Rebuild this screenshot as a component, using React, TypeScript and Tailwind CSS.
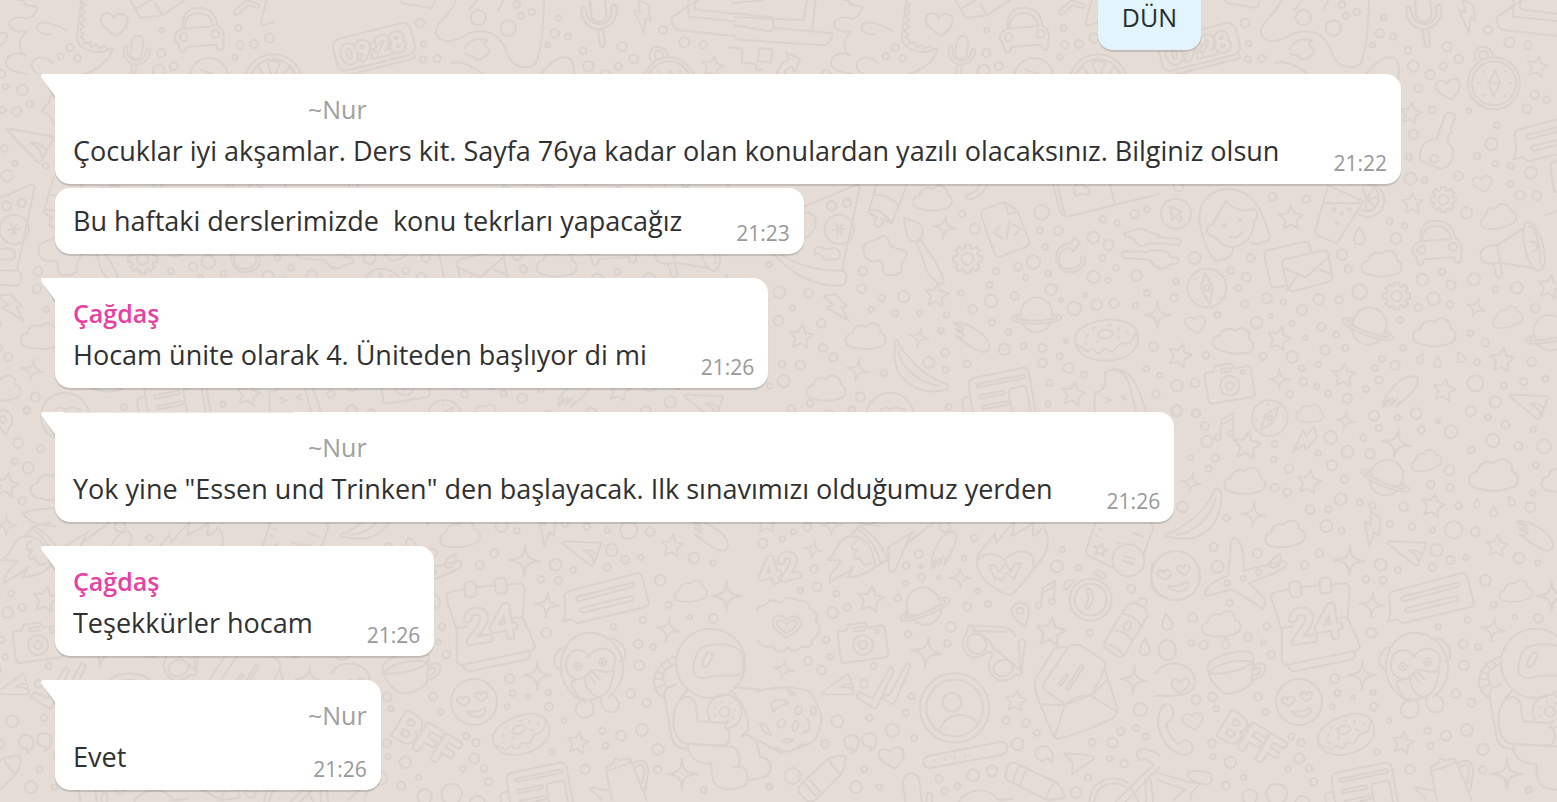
import { clsx } from "clsx";

type Message = {
  sender?: string;
  nickname?: string;
  text: string;
  time: string;
  edged?: boolean;
};

const messages: Message[] = [
  {
    nickname: "~Nur",
    text: "Çocuklar iyi akşamlar. Ders kit. Sayfa 76ya kadar olan konulardan yazılı olacaksınız. Bilginiz olsun",
    time: "21:22",
  },
  { text: "Bu haftaki derslerimizde  konu tekrları yapacağız", time: "21:23" },
  { sender: "Çağdaş", text: "Hocam ünite olarak 4. Üniteden başlıyor di mi", time: "21:26" },
  {
    nickname: "~Nur",
    text: 'Yok yine "Essen und Trinken" den başlayacak. Ilk sınavımızı olduğumuz yerden',
    time: "21:26",
    edged: true,
  },
  { sender: "Çağdaş", text: "Teşekkürler hocam", time: "21:26" },
  { nickname: "~Nur", text: "Evet", time: "21:26" },
];

/* ---------- Wallpaper ---------- */

const BG = "#e5dcd6";
const LINE = "#dbd2cc";

// Gear outline with eight rounded teeth
const gearPath = (() => {
  const pts: string[] = [];
  for (let i = 0; i < 8; i++) {
    const a = (i * Math.PI) / 4;
    [
      [-0.28, 31],
      [-0.2, 41],
      [0.2, 41],
      [0.28, 31],
    ].forEach(([d, r]) => pts.push(`${(Math.cos(a + d) * r).toFixed(1)} ${(Math.sin(a + d) * r).toFixed(1)}`));
  }
  return `M${pts.join("L")}Z`;
})();

// Hollow lettering: a thick dark stroke with a thinner light one on top
function Lettering({ x, y, size, turn, children }: { x: number; y: number; size: number; turn: number; children: string }) {
  const common = {
    textAnchor: "middle" as const,
    dominantBaseline: "central" as const,
    fontSize: size,
    fontFamily: "Lato",
  };
  return (
    <g transform={`translate(${x} ${y}) rotate(${turn})`}>
      <text {...common} fill={LINE} strokeWidth="17">
        {children}
      </text>
      <text {...common} fill={BG} stroke={BG} strokeWidth="5">
        {children}
      </text>
    </g>
  );
}

const shapes = {
  star: <path d="M0-38L11-14L37-11L18 7L22 33L0 21L-22 33L-18 7L-37-11L-11-14Z" />,
  sparkle: <path d="M0-42C2-10 10-4 42 0C10 4 2 10 0 42C-2 10-10 4-42 0C-10-4-2-10 0-42Z" />,
  cloud: <path d="M-40 36C-68 32-68-2-42-6C-36-28-16-36 0-26C18-48 48-34 46-8C70 2 64 32 40 36C14 44-14 44-40 36Z" />,
  heart: <path d="M4 34C-26 12-42-2-38-18C-32-38-8-34-2-18C8-36 34-32 38-14C40 2 30 14 4 34Z" />,
  drop: <path d="M0-24C8-8 16 2 15 11C11 25-11 25-15 11C-16 2-8-8 0-24Z" />,
  bolt: <path d="M-38-36L-2-42L34-4L16-2L38 38L-28-2L-8-8Z" />,
  gear: (
    <>
      <path d={gearPath} />
      <circle r="16" />
    </>
  ),
  planet: (
    <>
      <circle r="50" />
      <ellipse cy="4" rx="80" ry="19" />
      <ellipse cy="3" rx="66" ry="9" />
      <path d="M-47 5A50 50 0 1 1 47 5C28 15-28 15-47 5Z" />
    </>
  ),
  camera: (
    <>
      <path d="M-60-42H-42L-34-58H14L22-42H60Q70-42 70-32V42Q70 52 60 52H-60Q-70 52-70 42V-32Q-70-42-60-42Z" />
      <circle cy="7" r="29" />
      <circle cy="7" r="12" />
      <circle cx="46" cy="-28" r="6" />
      <rect x="-20" y="-46" width="32" height="11" rx="5" />
    </>
  ),
  donut: (
    <>
      <path d="M-94-6C-96-44-40-62 10-60C70-58 98-30 94 2C90 44 50 64 0 62C-56 60-94 34-94-6Z" />
      <path d="M-94-6C-90 20-72 10-68 24C-62 38-50 16-42 24C-34 40-24 44-14 28C-4 18 4 40 18 34C30 26 38 8 52 14C70 22 80 2 90-14" />
      <ellipse cx="-2" cy="-18" rx="22" ry="13" />
      <path d="M-60-14l6-8M-40-36l8-6M-32 4l8-4M8-44l8 2M40-34l-4 8M34-6l8 6M62-18l4 6M-64 2l2 6" />
    </>
  ),
  smiley: (
    <>
      <circle r="69" />
      <path d="M-30 12C-46 4-56-4-50-12C-44-18-36-14-34-8C-32-18-18-20-14-10C-10-2-20 4-30 12Z" />
      <path d="M24-2C8-12 0-18 6-26C12-32 18-28 22-22C24-32 38-32 40-24C42-14 32-8 24-2Z" />
      <path d="M-22 28C-2 32 18 28 32 16C40 30 28 46 8 44C-6 44-16 40-22 28Z" />
    </>
  ),
  banana: (
    <path d="M-82-70C-74-76-68-70-70-58C-46-26 2 44 80 66C94 74 84 86 70 88C0 104-92 60-82-44ZM-72-38C-60 20-6 62 58 74" />
  ),
  feather: (
    <path d="M-54-42C-30-46-6-34 20-16C50 6 58 30 48 42C34 56 0 34-34 8M-54-42L-28-30M-54-42C-60-38-36-28-26-20M-46-22C-52-18-30-10-22-4M-48-4C-50 2-34 6-30 10M-46-22L-28-14M-48-4L-30 4" />
  ),
  car: (
    <>
      <path d="M-48-4C-50-46-36-66 0-66C34-66 52-46 56-14C74-4 80 10 74 32V52C72 62 58 62 54 54V44L-36 50L-40 62C-46 72-58 66-58 54L-62 40C-76 30-76 6-48-4Z" />
      <path d="M-42-4C-42-38-28-50 0-50C28-50 40-34 44-12Z" />
      <circle cx="-45" cy="22" r="12" />
      <circle cx="50" cy="12" r="12" />
    </>
  ),
  compass: (
    <>
      <circle r="58" />
      <path d="M-6-46L18 0L8 48L-18 2Z" />
      <circle r="8" />
      <path d="M-36-28l2 2M28-36l2 2M-28 34l2 2M36 28l2 2" />
    </>
  ),
  paper: (
    <>
      <path d="M-72 140L-100-34Q-102-54-84-58L58-88Q76-92 80-74L118 140" />
      <path d="M-96 0C-118-2-122 8-118 24L-106 100" />
      <path d="M-74-40L66-68Q74-60 66-58L-72-30Q-80-36-74-40ZM-68-6L4-20Q12-14 6-10L-64 4Q-72-2-68-6ZM-60 26L14 12Q22 18 16 22L-54 36Q-64 30-60 26Z" />
      <path d="M28-26L62-34Q72-36 74-26L86 44L40 54Q32 54 30 44L20-10Q18-24 28-26Z" />
    </>
  ),
  plane: <path d="M-56-24L50-20Q60-20 56-12L36 42Q32 52 22 46L-56-16Q-62-22-56-24ZM36 42C34 22 22 10 4 4C14-2 34 6 42 14" />,
  note: (
    <>
      <path d="M-16 34V-18L18-44L22 20M-16-2L18-28" />
      <circle cx="-22" cy="34" r="9" />
      <circle cx="16" cy="20" r="9" />
    </>
  ),
  speech: (
    <>
      <path d="M-110-22L92-76Q106-80 110-66L130 10Q132 20 122 24L-84 74L-100 62L-128 68C-120 52-118 40-120 28L-124-6Q-122-18-110-22Z" />
      <path d="M-84-6L80-48Q92-44 84-36L-80 8Q-92 4-84-6ZM-72 28L78-8Q90-4 80 6L-68 42Q-82 38-72 28Z" />
    </>
  ),
  mic: (
    <>
      <rect x="-20" y="-52" width="38" height="78" rx="19" />
      <path d="M-44-8C-46 20-30 44 0 44C28 42 46 20 44-8C40-16 30-14 32-4C30 20 20 32 0 32C-20 30-32 16-32-6C-32-16-42-16-44-8ZM-8 44L-6 86Q4 94 6 84V44" />
    </>
  ),
};

type Item = [kind: keyof typeof shapes, x: number, y: number, scale?: number, turn?: number];
type Dot = [x: number, y: number, r: number];

type Patch = {
  x: number;
  y: number;
  items: Item[];
  dots: Dot[];
  art?: React.ReactNode;
};

// The wallpaper is drawn at three times its size, in patches
const patches: Patch[] = [
  {
    x: 735,
    y: 0,
    items: [
      ["heart", 613, 73, 1.05],
      ["mic", 680, 154, 0.9, 8],
      ["car", 866, 90],
    ],
    dots: [
      [755, 90, 7], [985, 84, 9], [990, 135, 11], [1032, 132, 12], [1078, 114, 14], [975, 171, 8],
      [480, 143, 11], [452, 169, 9], [503, 175, 10], [754, 159, 12], [791, 199, 12], [746, 212, 18],
    ],
    art: (
      <>
        <path d="M0 40L112 52L116 84L280 98Q294 98 292 104C286 126 276 140 258 136L0 118M0 76L104 94Q114 92 118 82" />
        <path d="M0 52L206 60L216 0M232 92L242 0M-10 10L90 0" />
        <rect x="70" y="146" width="40" height="40" rx="3" transform="rotate(5 90 166)" />
        <path d="M-20 142L22 146L20 188M24 188L64 192L62 208L80 210" />
        <path d="M124 222C138 190 150 178 164 178L152 158L196 176L180 216L168 200C156 206 150 212 148 222" />
        <path d="M310-10C322 4 332 0 342 0C338 22 372 14 382 22C378 44 366 54 348 56C326 48 296 56 298 74C300 92 328 96 348 96C322 120 328 140 334 158L344 166C322 152 286 164 288 190C290 210 320 218 352 222" />
        <path d="M472 92C440 76 400 60 384 72C372 90 392 106 422 102M428 188C408 170 374 166 366 190C362 206 372 216 384 222" />
        <path d="M514 0L500 110C502 150 560 170 608 144C602 180 560 214 516 224" />
        <path d="M514 4l12 10l-12 12l12 10l-14 12l12 10l-14 12l12 10l-14 12l12 10l-10 10l14 6l-2 14l18-6l4 16l16-8l6 12l16-8l10 8" />
        <path d="M660 0L692 54L756 46L830-4M678 26L726-2M736 12L756 46" />
        <path d="M972 34L1010 0L1048 14Q1050 28 1036 22L1012 16L984 44Q970 46 972 34ZM1070 0L1052 68Q1058 80 1068 74L1090 66" />
        <circle cx="897" cy="232" r="58" />
        <path d="M872 210L912 222" />
        <circle cx="1090" cy="250" r="87" />
        <circle cx="1090" cy="250" r="72" />
        <path d="M1090 238L1072 190Q1092 174 1110 190ZM1070 240L1044 200Q1032 206 1024 222M1108 240L1138 200Q1152 212 1156 226" />
      </>
    ),
  },
  {
    x: 1040,
    y: 0,
    items: [
      ["mic", 1152, 34, 1.2, -6],
      ["bolt", 1278, 48, 0.95, 35],
      ["star", 1492, 200, 0.85, 12],
      ["heart", 1226, 268, 0.95, -12],
      ["star", 1112, 340, 0.85, 8],
      ["speech", 1548, 410],
      ["heart", 1328, 552, 0.75, -12],
    ],
    dots: [
      [790, 53, 23], [880, 84, 23], [906, 14, 10], [918, 47, 9], [950, 36, 10], [1031, 54, 8], [1020, 100, 13],
      [1059, 110, 9], [998, 135, 7], [1104, 152, 10], [1120, 199, 16], [1170, 224, 14], [1221, 140, 14],
      [1210, 199, 11], [1256, 177, 13], [1344, 90, 12], [1408, 127, 15], [1464, 135, 11], [615, 69, 13],
      [626, 131, 8], [624, 178, 9], [666, 176, 11], [1135, 265, 12], [1176, 330, 11], [1120, 403, 14],
      [1286, 332, 7], [1370, 376, 9], [1354, 432, 18], [1311, 468, 10], [1366, 491, 8], [1412, 498, 9],
      [1473, 518, 18], [1107, 471, 9], [1112, 536, 18], [1154, 541, 9], [1256, 528, 14], [1410, 552, 9],
      [1484, 284, 12], [1520, 299, 10], [1460, 326, 13],
    ],
    art: (
      <>
        <g transform="rotate(-14 476 145)">
          <rect x="358" y="92" width="240" height="98" rx="24" />
          <path d="M364 204H586Q594 196 588 188" />
        </g>
        <Lettering x={474} y={142} size={74} turn={-14}>
          09:28
        </Lettering>
        <circle cx="1362" cy="250" r="78" />
        <circle cx="1362" cy="250" r="66" />
        <path d="M1366 210L1380 248L1360 290L1346 250ZM1346 250H1380M1313 248h8M1406 250h8M1328 212l5 5M1398 212l-5 5M1328 288l5-5M1398 290l-5-5" />
        <path d="M1306 182C1294 150 1320 136 1338 142C1358 150 1362 164 1354 172" />
        <circle cx="1331" cy="165" r="13" />
        <path d="M724-10C720 40 660 60 662 100C680 140 730 120 760 100C830 80 860 110 880 170C900 210 950 206 962 190C984 140 984 60 988-10" />
        <path d="M1448 0L1370 52Q1370 76 1386 90L1560 108M1420 0V50L1560 64M1440 0V28L1560 42" />
        <path d="M980 222C1010 180 1040 164 1066 176C1082 200 1078 220 1070 250" />
        <path d="M750 148C756 120 796 110 816 124C800 130 812 140 824 150C822 166 800 180 782 178C776 162 762 166 752 162M706 190C730 178 780 200 802 222" />
        <path d="M550-6L562 10L650 24L664-4M764 30L790-6M850 30L868-6" />
        <path d="M1216 344C1222 334 1242 336 1246 352L1232 386L1236 398L1226 402L1224 430C1240 440 1244 456 1236 480C1226 506 1208 508 1190 502L1152 488C1134 480 1138 456 1150 434C1160 420 1178 418 1190 418Z" />
        <circle cx="1183" cy="477" r="12" />
        <path d="M1560 480L1540 486Q1530 490 1532 502L1542 574L1560 578" />
      </>
    ),
  },
  {
    x: 760,
    y: 180,
    items: [
      ["cloud", 518, 52, 0.95],
      ["sparkle", 553, 142, 0.85, 8],
      ["gear", 623, 237, 1.08],
      ["star", 530, 345, 0.95, 8],
      ["bolt", 228, 384, 1],
      ["star", 124, 470, 0.95, 6],
      ["cloud", 317, 466, 0.98],
      ["sparkle", 478, 472, 0.7, 12],
      ["feather", 636, 470],
      ["banana", 482, 548, 0.95],
      ["planet", 830, 410, 0.93, -1],
      ["donut", 1040, 480, 1, -5],
      ["sparkle", 292, 570, 0.8, 12],
      ["cloud", 198, 622, 0.95],
      ["paper", 726, 652],
      ["star", 940, 642, 0.95, 10],
      ["sparkle", 1192, 405, 0.95],
    ],
    dots: [
      [260, 70, 12], [215, 78, 13], [606, 102, 10], [644, 146, 15], [845, 97, 22], [839, 151, 9], [895, 152, 13],
      [855, 201, 9], [820, 246, 20], [774, 260, 12], [797, 293, 8], [708, 274, 9], [865, 281, 8], [688, 314, 9],
      [602, 339, 8], [638, 388, 13], [693, 363, 19], [764, 348, 12], [873, 328, 17], [903, 359, 6], [974, 345, 6],
      [943, 386, 20], [1010, 374, 16], [1062, 370, 14], [1126, 377, 8], [1161, 339, 9], [1000, 172, 17],
      [1046, 195, 15], [1027, 233, 9], [1068, 263, 9], [1000, 291, 18], [1044, 301, 8], [1130, 286, 16],
      [1029, 118, 10], [1071, 129, 8], [1124, 102, 13], [1161, 88, 9], [309, 274, 13], [305, 326, 13],
      [365, 354, 10], [431, 350, 17], [333, 388, 8], [405, 400, 10], [479, 399, 8], [559, 405, 8], [543, 452, 9],
      [58, 337, 18], [146, 340, 13], [97, 385, 8], [56, 422, 15], [184, 430, 13], [189, 503, 12], [220, 532, 12],
      [66, 553, 10], [121, 555, 14], [71, 603, 18], [26, 254, 8], [371, 579, 10], [301, 651, 14], [506, 548, 16],
      [555, 518, 12], [557, 569, 9], [622, 552, 11], [733, 508, 17], [790, 499, 9], [746, 455, 9], [696, 428, 9],
      [847, 504, 12], [899, 529, 9], [847, 549, 13], [926, 564, 15], [973, 584, 9], [917, 482, 6], [868, 609, 9],
      [864, 673, 8], [566, 681, 9], [150, 670, 10], [94, 686, 11], [1181, 500, 13], [1159, 566, 8], [1188, 642, 11],
      [275, 688, 10], [29, 618, 8],
    ],
    art: (
      <>
        <path d="M-10 140L290 14Q300 14 298 26L246 270C266 280 262 310 244 318C160 318 90 280 40 220M60 222C110 256 180 274 246 272M298 26L264 190" />
        <circle cx="238" cy="148" r="44" />
        <path d="M218 150L256 146M228 132L244 164M246 132L230 164M130 98C176 92 182 146 136 174" />
        <path d="M164 206C180 190 190 212 206 206C226 200 244 212 238 232C232 246 216 232 204 240C180 240 196 218 164 222Z" />
        <path d="M356-10L326 96Q336 108 350 112C340 130 342 144 358 140C376 130 368 124 364 116L396 130L446 0M344 44C370 44 396 54 414 74M334 90C356 84 378 104 396 130" />
        <path d="M310 214C308 180 336 188 360 172C378 158 386 176 388 192C400 214 440 200 440 222C432 240 420 252 426 274C416 286 392 288 378 284C358 270 380 250 356 240C336 250 314 240 310 214Z" />
        <path d="M432 114C460 124 490 124 488 158C488 172 478 186 462 184C436 182 438 150 432 114ZM468 186L482 180C496 200 502 214 510 220C526 244 544 270 552 304C546 316 536 312 532 308C508 290 494 266 490 238Z" />
        <path d="M676 86L734 66L774 94L808 186Q808 196 800 200L722 230Q708 232 704 222L664 108Q664 90 676 86ZM734 66L744 102L774 94M720 138L702 158L728 176M740 178L748 124M758 132L780 146L764 166" />
        <path d="M874-6L900 92Q908 110 924 110L1066 74L1200 42M888-6L914 104M1046-6L1064 72M942 20L958 6L974 20L990 28L982 46L966 40L946 48Z" />
        <path d="M616 46C640 40 660 30 662-6L684-4C684 36 644 60 624 58Z" />
        <path d="M944 172L960 188L940 214L930 204C890 206 886 256 918 268C956 268 970 248 962 232Q970 224 976 236C976 270 940 282 912 274C876 250 880 196 932 188Z" />
        <path d="M1092 160C1096 154 1120 156 1126 150C1146 136 1160 160 1200 166M1092 160Q1096 172 1120 174C1132 200 1150 204 1164 190L1200 192M1088 214Q1080 226 1094 234L1170 240Q1180 262 1200 262M1088 214L1164 216Q1180 206 1200 212" />
        <circle cx="390" cy="710" r="72" />
        <path d="M362 690Q374 676 390 688Q410 676 436 690" />
        <path d="M1010 720C1000 690 1004 670 1004 636C1034 640 1040 600 1034 576C1070 560 1096 572 1110 620L1134 720M1060 568C1110 566 1130 600 1162 710M1036 654L1054 660L1040 668M1098 644L1084 652L1100 660" />
      </>
    ),
  },
  {
    x: 1157,
    y: 180,
    items: [
      ["star", 402, 114, 0.95],
      ["star", 766, 70, 0.85],
      ["gear", 859, 59, 0.95],
      ["cloud", 1022, 108, 0.88, -12],
      ["car", 838, 188],
      ["drop", 607, 168, 1.15],
      ["cloud", 674, 248, 0.98],
      ["compass", 150, 324],
      ["gear", 719, 348],
      ["planet", 634, 444, 1, 20],
      ["heart", 116, 434, 0.78, -8],
      ["cloud", 230, 478, 1, 8],
      ["cloud", 832, 454, 1.05],
      ["sparkle", 956, 383, 0.75, 20],
      ["cloud", 1050, 410, 0.75, -15],
      ["star", 366, 476, 0.95, 14],
      ["star", 68, 526, 0.95, 16],
      ["camera", 217, 610, 1, -9],
      ["sparkle", 367, 598, 0.75],
      ["star", 560, 586, 0.95, 4],
      ["drop", 790, 536, 0.7, 25],
      ["drop", 842, 546, 0.75],
      ["drop", 910, 532, 0.75, -25],
      ["star", 1036, 540, 0.98, 6],
      ["feather", 730, 634, 1, -78],
      ["star", 862, 630, 0.9, 10],
      ["planet", 1180, 464, 0.95, -12],
      ["star", 1178, 320, 0.95, 10],
      ["plane", 1116, 668],
    ],
    dots: [
      [347, 50, 12], [449, 57, 11], [64, 20, 14], [113, 234, 18], [281, 234, 12], [221, 272, 10], [268, 291, 13],
      [244, 324, 9], [263, 372, 11], [330, 355, 15], [380, 366, 8], [435, 390, 15], [485, 358, 16], [546, 360, 11],
      [405, 430, 8], [493, 441, 12], [445, 474, 7], [538, 464, 9], [504, 510, 14], [565, 503, 9], [484, 553, 8],
      [406, 531, 17], [318, 529, 11], [299, 428, 17], [340, 408, 6], [181, 405, 9], [51, 354, 11], [57, 304, 8],
      [555, 224, 16], [574, 267, 11], [608, 335, 22], [717, 175, 16], [698, 124, 9], [743, 138, 8], [929, 99, 17],
      [1060, 12, 9], [1089, 46, 14], [1139, 47, 13], [856, 275, 9], [796, 299, 18], [882, 315, 14], [830, 356, 19],
      [784, 382, 11], [879, 373, 10], [951, 298, 18], [1015, 327, 9], [1080, 323, 17], [1135, 385, 13],
      [729, 420, 9], [940, 460, 9], [985, 488, 11], [738, 503, 9], [714, 556, 14], [675, 537, 9], [654, 564, 9],
      [666, 600, 11], [627, 627, 9], [571, 655, 14], [514, 641, 9], [479, 620, 8], [439, 605, 12], [434, 565, 8],
      [398, 643, 10], [147, 526, 10], [115, 608, 13], [60, 617, 17], [60, 692, 16], [117, 700, 12], [960, 547, 9],
      [1124, 545, 13], [955, 610, 24], [1040, 617, 9], [1100, 605, 11], [1165, 597, 9], [1015, 666, 17], [8, 586, 8],
    ],
    art: (
      <>
        <circle cx="57" cy="101" r="45" />
        <path d="M40 80L74 94L64 102L76 118L68 124L56 110L46 120Z" />
        <path d="M128 130C120 60 170 20 230 28C300 40 320 110 340 172Q336 190 290 192L280 186M128 130C138 180 152 220 176 242C210 240 232 224 228 200M206 62C190 100 166 118 172 134C150 130 142 156 160 166C176 166 186 186 200 196C240 210 290 190 292 120C310 110 298 84 286 88C250 96 224 84 206 62ZM218 172C232 176 246 168 256 156" />
        <circle cx="204" cy="136" r="4" />
        <circle cx="249" cy="121" r="4" />
        <path d="M514 16L474 154Q476 164 490 170L540 190L620 64ZM500 70H616" />
        <path d="M580 14C610-10 680 10 682 60C680 104 640 120 606 104M628 14C650 14 668 34 664 60C660 90 634 98 612 90M628 56L616 20M628 56L650 24M628 56L664 52M628 56L654 82M628 56L626 94" />
        <circle cx="532" cy="88" r="4" />
        <circle cx="577" cy="88" r="4" />
        <circle cx="554" cy="100" r="4" />
        <circle cx="540" cy="130" r="4" />
        <path d="M390 318L356 322Q344 324 340 312L322 226Q320 214 334 210L440 186Q454 182 458 194L464 216" />
        <path d="M384 238L496 212Q510 210 514 222L526 292Q526 302 514 306L408 334Q396 336 392 326L376 256Q374 242 384 238ZM376 262L446 292L512 234M392 328L420 288M526 284L488 270" />
        <path d="M1020 196L1100 144M1030 248L1126 264M1020 196C990 192 970 208 970 228C972 248 990 256 1030 248M1020 196L1036 282Q1030 300 1018 288L1008 250" />
        <path d="M1104 130C1124 112 1156 160 1164 230C1166 268 1144 284 1128 262C1108 240 1090 160 1104 130ZM1116 140C1134 130 1148 190 1150 250M1122 186C1140 180 1150 210 1126 216" />
        <path d="M0 170L64 176Q78 184 68 194L0 190M0 212Q30 206 40 232L60 234Q70 240 60 250L38 254Q24 270 0 264" />
        <path d="M1166 104Q1190 100 1200 90" />
      </>
    ),
  },
  {
    x: 1157,
    y: 400,
    items: [
      ["compass", 338, 54, 0.92, 45],
      ["cloud", 458, 38, 0.68],
      ["sparkle", 565, 62, 0.7, 10],
      ["note", 208, 80, 1, 6],
      ["star", 270, 136, 1.1, 8],
      ["bolt", 440, 118, 0.95, 85],
      ["cloud", 263, 240, 1],
      ["star", 456, 246, 0.95, 10],
      ["sparkle", 718, 130, 1.05, 10],
      ["planet", 686, 238, 0.96, 22],
      ["cloud", 806, 180, 0.75, -15],
      ["cloud", 1010, 222, 1.2],
      ["cloud", 1215, 236, 1],
      ["sparkle", 102, 248, 0.75, 12],
      ["banana", 102, 340, 0.95, -84],
      ["sparkle", 289, 344, 0.85, 5],
      ["cloud", 383, 400, 0.98, -6],
      ["star", 828, 316, 0.95, 12],
      ["bolt", 640, 386, 1, 48],
      ["plane", 750, 448],
      ["sparkle", 578, 482, 1.1, 2],
      ["star", 1020, 438, 0.88, 6],
      ["feather", 1136, 406],
      ["drop", 960, 310, 0.6, 5],
      ["drop", 1010, 334, 0.7],
      ["drop", 1062, 303, 0.65, -25],
      ["speech", 820, 596],
      ["smiley", 56, 527, 1.06],
      ["cloud", 192, 670, 0.95, -4],
      ["sparkle", 645, 614, 0.9, 5],
      ["cloud", 1076, 572, 0.8, -6],
      ["sparkle", 1184, 588, 1.1],
      ["sparkle", 1008, 688, 0.88, 10],
      ["drop", 30, 666, 1.05, -10],
      ["drop", 206, 730, 0.75],
      ["sparkle", 616, 826, 1],
      ["smiley", 426, 906],
      ["donut", 568, 1004, 0.92, -20],
      ["heart", 108, 964, 0.78, -8],
      ["star", 738, 1028, 0.88, 10],
      ["paper", 624, 1176],
      ["sparkle", 1050, 1122, 1.08],
    ],
    dots: [
      [58, 33, 16], [117, 40, 12], [144, 78, 12], [150, 124, 17], [101, 173, 8], [175, 174, 11], [155, 206, 9],
      [354, 132, 9], [350, 178, 8], [396, 206, 13], [353, 263, 12], [391, 277, 12], [483, 159, 8], [521, 112, 19],
      [525, 196, 15], [562, 238, 11], [572, 155, 18], [639, 161, 14], [619, 113, 9], [651, 47, 15], [665, 84, 9],
      [722, 53, 8], [778, 40, 16], [793, 90, 11], [843, 64, 6], [882, 95, 19], [941, 34, 15], [993, 52, 9],
      [1045, 74, 12], [1129, 88, 8], [1008, 121, 20], [1084, 137, 12], [1161, 139, 21], [943, 150, 10],
      [877, 211, 15], [879, 263, 11], [821, 254, 11], [1136, 195, 9], [1127, 279, 8], [1120, 322, 15],
      [551, 298, 18], [608, 308, 9], [646, 317, 10], [740, 320, 13], [699, 372, 9], [765, 380, 10], [826, 391, 8],
      [905, 317, 10], [890, 390, 26], [955, 395, 13], [839, 450, 18], [880, 480, 12], [927, 472, 8], [826, 502, 11],
      [723, 510, 9], [671, 494, 18], [627, 538, 10], [679, 541, 11], [459, 329, 13], [514, 328, 9], [508, 378, 18],
      [554, 392, 9], [487, 460, 12], [443, 496, 12], [209, 354, 10], [76, 321, 16], [170, 441, 12], [301, 460, 14],
      [182, 500, 18], [218, 609, 9], [107, 653, 13], [330, 680, 10], [273, 712, 12], [320, 727, 7], [343, 764, 11],
      [140, 735, 13], [104, 729, 9], [533, 836, 14], [542, 879, 9], [588, 892, 6], [649, 877, 8], [651, 920, 12],
      [526, 920, 7], [643, 698, 15], [985, 541, 16], [1086, 474, 16], [1143, 489, 8], [1010, 614, 9], [1074, 651, 7],
      [1144, 655, 13], [932, 660, 9], [844, 680, 8], [919, 732, 13], [963, 741, 9], [921, 796, 15], [896, 881, 13],
      [944, 908, 12], [695, 962, 7], [812, 993, 10], [867, 1007, 15], [820, 1037, 9], [930, 990, 18],
      [978, 1048, 17], [977, 1109, 11], [759, 1108, 14], [660, 1056, 8], [403, 1009, 9], [432, 1028, 11],
      [427, 1075, 15], [393, 1107, 8], [456, 1105, 10], [470, 1145, 11], [326, 936, 8], [303, 890, 12],
      [166, 891, 13], [177, 926, 8], [117, 899, 13], [165, 1030, 12], [168, 1070, 8], [220, 1087, 17],
      [260, 1132, 8], [207, 1157, 12], [278, 1190, 22], [359, 1182, 31], [1115, 1169, 9], [436, 1210, 22],
    ],
    art: (
      <>
        <path d="M228 414C250 418 262 440 260 512L376 484Q390 482 388 494C384 512 320 530 276 550L322 596Q328 610 316 626C290 610 250 580 222 568L160 586Q140 590 144 576C156 550 180 540 214 526L222 424ZM338 500C336 480 352 470 370 462C374 480 370 496 352 504Z" />
        <circle cx="211" cy="549" r="8" />
        <circle cx="259" cy="535" r="8" />
        <circle cx="305" cy="517" r="8" />
        <path d="M396 568L356 576Q338 580 344 598L374 690V780Q376 796 392 794L596 752Q612 748 608 734L572 654L578 568Q578 552 564 550L526 554M434 562L488 556M374 684L408 680M536 654L572 652M390 796L402 810Q408 818 420 812L588 778Q598 772 590 752" />
        <rect x="398" y="545" width="34" height="46" rx="10" transform="rotate(-6 415 568)" />
        <rect x="489" y="534" width="34" height="46" rx="10" transform="rotate(-6 506 557)" />
        <Lettering x={474} y={668} size={134} turn={-9}>
          24
        </Lettering>
        <Lettering x={284} y={1014} size={112} turn={31}>
          BFF
        </Lettering>
        <path d="M152 806C146 780 220 748 276 756C290 758 294 770 288 790L284 850C250 880 220 882 202 880C176 860 156 840 152 806ZM158 822C160 800 220 776 284 784C278 806 220 820 158 822ZM290 800C310 780 330 792 324 812C318 832 300 836 288 840M294 808C306 796 314 806 308 816C302 826 296 826 292 826" />
        <ellipse cx="31" cy="750" rx="26" ry="30" />
        <path d="M-6 888C20 886 60 892 90 880C130 860 120 800 56 790C30 790 10 800-4 820M66 880C44 862 38 852 48 842C60 836 68 842 70 848C76 830 98 834 98 848C96 864 80 872 66 880Z" />
        <path d="M20 916C40 904 50 920 48 950C44 966 28 962 28 976C34 1000 46 1020 62 1032C76 1030 80 1016 88 1020C104 1026 112 1040 106 1050C92 1070 68 1066 52 1054C12 1030-16 960 20 916Z" />
        <path d="M0 1118L96 1146L130 1150M92 1128C86 1112 110 1110 150 1116C172 1124 168 1150 150 1154C120 1150 100 1140 92 1128ZM0 1140L84 1168L50 1200M130 1150L100 1184V1200" />
        <path d="M760 906C720 890 684 850 686 800C690 730 730 698 776 698C840 700 876 760 874 810C870 850 850 874 830 890M706 740C670 740 650 790 684 810M822 716C860 710 886 740 878 776L862 784M770 770C756 740 700 740 702 800C704 830 730 842 748 836C766 830 770 822 780 810C800 804 820 826 840 812C860 780 846 752 820 746C796 744 780 756 770 770ZM740 836C716 850 716 838 720 858L740 894C790 910 830 884 838 850L846 814M760 826C756 860 770 880 800 894M766 820L790 850M778 812L802 838" />
        <circle cx="738" cy="800" r="11" />
        <circle cx="812" cy="786" r="11" />
        <circle cx="738" cy="801" r="3" />
        <circle cx="812" cy="787" r="3" />
        <path d="M746 904C722 924 728 952 758 954C790 952 790 920 776 904M810 890C800 920 820 940 846 936C872 920 860 896 836 882" />
        <path d="M840 1200L822 1110Q820 1100 834 1096L846 1084L850 1074L862 1080L890 1076Q898 1078 898 1086L944 1200M822 1112C850 1106 880 1096 896 1086M900 1094C930 1070 950 1084 948 1120L940 1170M908 1104C924 1086 938 1094 936 1120L930 1150M832 1170C810 1174 790 1160 776 1164C774 1176 800 1180 806 1200" />
      </>
    ),
  },
  {
    // Astronaut, split over the edge of the tile
    x: 1205,
    y: 510,
    items: [],
    dots: [[970, 840, 8], [1168, 831, 7]],
    art: (
      <>
        <path d="M886 440C850 450 820 480 822 520C826 544 838 556 852 562M888 462C860 470 846 490 850 508L858 530M862 448l10 18M842 462l14 18M828 482l18 10M822 506l26 2M828 534l24-10" />
        <path d="M888 524L866 532Q850 538 854 560L874 680C880 704 894 718 922 716M922 540L902 564M1060 548C1090 580 1106 620 1104 660C1096 672 1086 676 1084 680C1110 664 1134 690 1140 742C1170 740 1180 780 1160 796C1130 814 1110 808 1102 810C1100 830 1070 840 1040 838C1008 836 992 816 994 760C950 764 924 740 924 704" />
        <circle cx="992" cy="460" r="104" />
        <path d="M958 418C980 400 1040 396 1072 416C1096 440 1094 470 1086 492C1050 502 1020 492 992 500C960 510 938 500 940 474C942 450 950 430 958 418ZM970 450C976 430 990 422 996 430C1000 440 988 464 976 472C968 472 964 462 970 450Z" />
        <circle cx="1034" cy="605" r="51" />
        <circle cx="1034" cy="605" r="15" />
        <path d="M1026 574v3M1050 578v3M1064 600v3M1058 622v3M1006 590v3M1006 616v3" />
        <path d="M884 600C894 566 916 556 934 564C956 584 946 610 954 634L1018 638C1030 640 1040 636 1044 632L1034 652C1052 656 1054 690 1040 704C990 710 940 700 910 700C880 680 876 640 884 600Z" fill={BG} />
        <path d="M924 702L1060 710C1080 730 1080 754 1076 770C1098 770 1104 790 1102 810M1060 770H1080M1084 678L1092 670" />
        <path d="M1064 532L1150 540L1200 532" />
      </>
    ),
  },
  {
    x: 760,
    y: 510,
    items: [
      ["sparkle", 160, 118, 0.7, 12],
      ["star", 332, 268, 1.05, 8],
      ["feather", 550, 118, 0.95, -98],
      ["sparkle", 601, 204, 0.78],
      ["planet", 494, 294, 1, -22],
      ["camera", 308, 398, 1.02, -8],
      ["note", 862, 254, 1, 6],
      ["star", 872, 366, 1.15, 8],
      ["sparkle", 500, 426, 1.1, 8],
      ["sparkle", 70, 478, 0.75, 12],
      ["star", 768, 573, 0.85, 8],
      ["heart", 396, 744, 0.98, -10],
      ["drop", 1154, 412, 1.05],
      ["sparkle", 1121, 510, 0.95, 5],
      ["plane", 236, 534, 0.85, -38],
      ["sparkle", 214, 46, 0.75],
      ["star", 20, 36, 0.9],
    ],
    dots: [
      [67, 87, 8], [100, 65, 8], [142, 51, 12], [9, 100, 14], [162, 177, 11], [171, 231, 13], [121, 240, 8],
      [229, 251, 9], [262, 292, 11], [218, 308, 16], [199, 389, 9], [210, 440, 8], [144, 453, 12], [185, 480, 13],
      [413, 264, 10], [438, 167, 10], [476, 133, 12], [483, 169, 5], [485, 202, 10], [437, 220, 7], [537, 202, 6],
      [643, 84, 10], [612, 145, 7], [653, 243, 7], [622, 290, 12], [684, 282, 9], [573, 351, 15], [562, 400, 10],
      [445, 373, 10], [341, 468, 9], [312, 521, 12], [455, 559, 9], [438, 608, 9], [328, 624, 10], [232, 634, 18],
      [398, 661, 20], [462, 684, 9], [195, 702, 12], [313, 777, 9], [288, 832, 18], [358, 831, 8], [97, 798, 24],
      [28, 830, 9], [738, 631, 11], [798, 639, 12], [831, 668, 9], [773, 702, 18], [696, 783, 16], [640, 796, 18],
      [592, 829, 9], [554, 843, 10], [537, 807, 11], [907, 119, 8], [891, 169, 18], [954, 173, 8], [1114, 236, 12],
      [990, 368, 9], [1141, 599, 20], [1128, 654, 9], [1082, 664, 11], [1057, 698, 15], [997, 697, 10],
      [1049, 746, 8], [1093, 761, 11], [984, 803, 10], [948, 847, 16], [1157, 680, 9], [555, 50, 16],
    ],
    art: (
      <>
        <Lettering x={56} y={172} size={104} turn={-14}>
          42
        </Lettering>
        <path d="M272 78C230 84 236 130 200 150L246 152C226 180 206 190 208 222C220 200 246 204 280 172L264 202C300 200 330 186 346 168M272 78C330 80 340 130 346 166M274 70L300 50C340 70 376 120 384 150L350 168M296 60C330 84 352 120 362 160M290 92C270 104 270 124 292 120C274 140 284 156 300 142C306 166 320 170 334 158M346 38L290 50M384 112L458 66C440 90 436 120 404 182Q394 190 388 182ZM440 100L524 36M384 112L388 182" />
        <path d="M30 270C50 270 60 290 76 264C100 258 112 276 120 272C140 270 150 284 148 296C170 300 174 324 166 332C184 346 182 370 172 372C166 390 160 384 156 392C158 412 140 414 124 408C110 430 96 424 84 412C70 430 50 428 40 410C20 412 0 410-6 392M-10 300C0 280 20 290 30 270" />
        <path d="M78 384C46 360 34 350 38 330C48 308 70 316 80 330C96 310 118 318 124 340C118 366 98 370 78 384ZM78 370C56 354 50 346 50 336C56 324 70 330 80 344C96 324 108 330 110 342C108 356 92 362 78 370Z" />
        <path d="M390 472L338 566L300 546Q288 552 290 562L340 594Q348 598 352 590L402 482Q398 470 390 472ZM438 462L388 556L378 552L370 566L390 580Q400 584 404 576L452 468Q446 458 438 462Z" />
        <path d="M744 254C700 240 646 196 650 150C660 110 690 100 704 70L708 98L764 34L756 78C780 60 800 60 820 36L818 78C836 72 840 60 850 52C866 70 870 110 850 140C820 180 790 220 762 248Q752 256 744 254ZM650 160C660 130 700 120 732 150C760 120 810 114 820 144L820 176" />
        <path d="M686 168L702 164L718 186L736 160L752 186L764 162L784 160L762 208L740 188L726 210L706 206Z" />
        <path d="M1006 40L978 120Q976 132 988 138L1056 172M1178 60L1150 134M1178 60Q1184 48 1172 40M1006 76l6 2M1018 56l6 4M1070 96l10 4M1118 68L1150 80M1002 108L1018 112L1026 100L1028 116L1044 120L1028 126L1030 138L1020 128L1006 134L1012 120Z" />
        <circle cx="1105" cy="151" r="48" />
        <path d="M1090 138L1124 146M1088 152L1122 162" />
        <circle cx="992" cy="269" r="63" />
        <circle cx="992" cy="269" r="48" />
        <path d="M980 238Q990 232 994 244L1000 268L984 296Q974 296 978 284L986 266ZM912 232C914 208 930 206 942 214L918 240ZM1004 190C1010 178 1028 180 1036 198Q1034 206 1028 206ZM1176 160L1172 230L1200 260" />
        <circle cx="780" cy="303" r="10" />
        <path d="M796 352C780 340 750 320 756 296C766 272 800 272 806 296C808 320 802 330 796 352Z" />
        <path d="M628 346L732 352C750 354 762 368 766 378M628 346C618 352 624 364 620 370C600 390 606 430 636 442C660 446 676 430 684 426C692 420 700 432 694 440C676 470 692 506 724 512C750 512 758 500 766 494C780 500 790 490 784 484L796 396C790 382 778 388 776 396L780 480M628 346L690 394C696 410 700 420 714 424L784 484M640 362L740 366" />
        <ellipse cx="650" cy="402" rx="28" ry="31" transform="rotate(-35 650 402)" />
        <ellipse cx="730" cy="474" rx="30" ry="24" transform="rotate(-15 730 474)" />
        <circle cx="584" cy="594" r="104" />
        <circle cx="584" cy="594" r="85" />
        <circle cx="576" cy="576" r="28" />
        <path d="M540 660C556 606 620 600 654 640" />
        <path d="M840 582C826 550 822 530 826 506L882 418Q890 412 904 412L924 412C936 402 950 402 964 408L1026 448Q1040 458 1034 476L1072 596Q1074 614 1060 624C1010 650 940 676 894 686Q884 686 880 678ZM924 412L854 516Q846 530 854 540L916 584L996 554L1034 478M840 582L914 586L884 682M914 586C940 560 960 556 992 556L1072 606M1040 510L996 554" />
        <path d="M918 494Q922 488 926 496L906 524Q896 528 896 520ZM962 466Q970 462 970 472L926 540Q918 542 920 534Z" />
        <path d="M1090 440Q1080 444 1070 438L1036 414Q1030 406 1034 396L1092 300C1100 280 1120 276 1132 282C1156 290 1166 300 1158 326ZM1092 312C1110 314 1136 328 1142 348M1064 362C1080 360 1110 376 1116 392M1036 402C1060 404 1084 420 1090 440M1134 274L1142 264Q1160 266 1162 276L1156 288" />
        <ellipse cx="1102" cy="348" rx="10" ry="15" transform="rotate(25 1102 348)" />
        <path d="M-8 546C20 530 60 536 96 532C120 540 150 536 158 556C170 590 186 600 184 630C180 660 170 690 150 700C120 716 90 724 60 728C30 710 10 700-8 690M34 580Q46 570 66 568L88 578Q60 584 40 606ZM84 540Q100 544 108 556Q90 560 84 540ZM0 640Q20 640 34 674Q6 670 0 640ZM30 716Q46 706 66 724M110 716Q120 700 144 704M66 692Q80 680 100 692Q80 704 66 692ZM138 624Q152 640 148 660L130 668" />
        <ellipse cx="116" cy="600" rx="10" ry="13" transform="rotate(20 116 600)" />
        <ellipse cx="64" cy="640" rx="10" ry="14" transform="rotate(30 64 640)" />
        <ellipse cx="106" cy="648" rx="8" ry="15" transform="rotate(10 106 648)" />
        <ellipse cx="160" cy="602" rx="8" ry="12" />
        <path d="M274 732C290 724 296 706 296 694C290 668 254 670 252 694C254 714 268 720 278 714C280 724 276 726 274 732ZM328 724C344 716 350 700 350 688C344 662 308 664 306 688C308 708 322 714 332 708C334 716 332 720 328 724ZM876 758C878 742 880 736 874 724C860 700 826 706 826 732C832 754 852 756 860 746Q870 746 876 758Z" />
        <path d="M504 738L720 696Q740 694 742 712Q742 728 726 734L510 774Q490 774 490 756Q492 742 504 738ZM522 750v3M553 747v3M584 742v3M616 737v3" />
        <path d="M912 730C940 734 970 730 998 740Q1002 746 998 750C980 762 950 780 938 792C930 776 948 760 932 752Z" />
        <path d="M206 744L250 736Q256 736 256 744C256 770 250 780 240 796L164 872Q150 878 138 870L118 848Q112 838 118 828ZM206 744C216 770 226 780 240 790M150 810L182 846M136 822L168 858" />
        <path d="M762 758Q748 756 744 768L736 796Q734 804 742 810L860 870L916 864C910 840 900 826 886 816ZM780 766Q764 784 762 814M804 778Q786 796 782 824M886 816Q870 830 858 868" />
        <path d="M440 900L428 820C430 780 474 784 478 810L488 900M500 880V854Q508 840 516 854V900M594 880C620 830 690 830 714 870L760 866M0 742C40 740 46 790 10 804" />
        <path d="M1068 874L1180 764L1154 744C1140 760 1124 740 1134 724C1150 708 1170 720 1200 736M1086 886L1200 770M1104 818C1060 790 990 810 988 876M1096 830C1060 810 1010 820 1002 876M1114 836L1138 880M1156 808L1158 880M1172 808L1180 880" />
      </>
    ),
  },
  {
    // Narrow strip left of the messages
    x: 825,
    y: 0,
    items: [
      ["plane", 90, 424, 1.2, 8],
      ["star", 20, 1455, 0.95, 10],
      ["cloud", 156, 1456, 1.05],
    ],
    dots: [
      [17, 260, 8], [67, 270, 16], [88, 312, 9], [8, 330, 10], [50, 334, 14], [13, 445, 10], [45, 490, 8],
      [137, 498, 8], [21, 527, 17], [20, 617, 14], [66, 608, 12], [4, 222, 12], [80, 1232, 10], [55, 1330, 15],
      [122, 1347, 11], [45, 1383, 9], [85, 1403, 17], [67, 1503, 11],
    ],
    art: (
      <>
        <path d="M170 272L150 290C154 316 128 320 126 332C140 344 150 340 150 352L166 376" />
        <path d="M18 1304C-10 1280-20 1250 0 1232C20 1226 38 1240 36 1266C32 1280 24 1290 18 1304Z" />
        <circle cx="8" cy="1258" r="10" />
        <path d="M70 1540C90 1526 130 1528 166 1524M70 1540C90 1570 120 1576 166 1578M80 1606L100 1580" />
      </>
    ),
  },
];

function Wallpaper() {
  return (
    <svg className="absolute inset-0 h-full w-full" aria-hidden="true">
      <defs>
        <g id="doodles" fill={BG} stroke={LINE} strokeWidth="6" strokeLinecap="round" strokeLinejoin="round">
          {patches.map((patch, p) => (
            <g key={p} transform={`translate(${patch.x} ${patch.y}) scale(0.33333)`}>
              <g fill="none">
                {patch.dots.map(([x, y, r], i) => (
                  <circle key={i} cx={x} cy={y} r={r} />
                ))}
              </g>
              {patch.items.map(([kind, x, y, scale = 1, turn = 0], i) => (
                <g key={i} transform={`translate(${x} ${y}) rotate(${turn}) scale(${scale})`}>
                  {shapes[kind]}
                </g>
              ))}
              <g fill="none">{patch.art}</g>
            </g>
          ))}
        </g>
      </defs>
      <use href="#doodles" x="-825" />
      <use href="#doodles" />
    </svg>
  );
}

/* ---------- Chat ---------- */

function Tail() {
  return (
    <svg className="absolute top-0 -left-[14px] h-[26px] w-[15px]" viewBox="0 0 15 26" aria-hidden="true">
      <path d="M1 4L14 25V2H1Z" fill="#000" opacity="0.13" />
      <path d="M2 0H15V23.500L0.700 4C-0.500 2 0 0 2 0Z" fill="#fff" />
    </svg>
  );
}

function Bubble({ message }: { message: Message }) {
  const hasHeader = Boolean(message.sender || message.nickname);

  return (
    <li
      className={clsx(
        "relative w-fit rounded-[15px] bg-white py-[13px] pr-[14px] pl-[18px] shadow-[0_2px_1px_rgba(0,0,0,0.15)]",
        hasHeader ? "mt-6 rounded-tl-none first:mt-0" : "mt-1"
      )}
    >
      {hasHeader && <Tail />}
      {message.edged && <span className="absolute top-0 left-[9px] h-px w-[230px] bg-[#efe9e6]" />}
      {message.sender && (
        <div className="h-11 text-[25px] leading-[44px] font-semibold text-[#e542a3]">{message.sender}</div>
      )}
      {message.nickname && (
        <div className="h-11 pl-[235px] text-[25px] leading-[44px] text-[#a0a0a0]">{message.nickname}</div>
      )}
      <div className="flex items-end justify-between gap-[54px]">
        <p className="text-[27px] leading-10 whitespace-pre-wrap text-[#303030]">{message.text}</p>
        <time className="text-[21px] leading-4 text-[#999999]">{message.time}</time>
      </div>
    </li>
  );
}

export default function App() {
  return (
    <div className="relative min-h-screen overflow-hidden bg-[#e5dcd6] font-['Open_Sans','Noto_Sans',sans-serif]">
      <Wallpaper />
      <main className="relative">
        <div className="flex justify-end pr-[356px]">
          <div className="h-[50px] rounded-b-[15px] bg-[#e1f5fe]/95 px-6 pt-[3px] text-[25px] leading-7 text-[#262d31] shadow-[0_2px_1px_rgba(0,0,0,0.15)]">
            DÜN
          </div>
        </div>
        <ul className="mt-6 pb-3 pl-[55px]">
          {messages.map((message, i) => (
            <Bubble key={i} message={message} />
          ))}
        </ul>
      </main>
    </div>
  );
}
